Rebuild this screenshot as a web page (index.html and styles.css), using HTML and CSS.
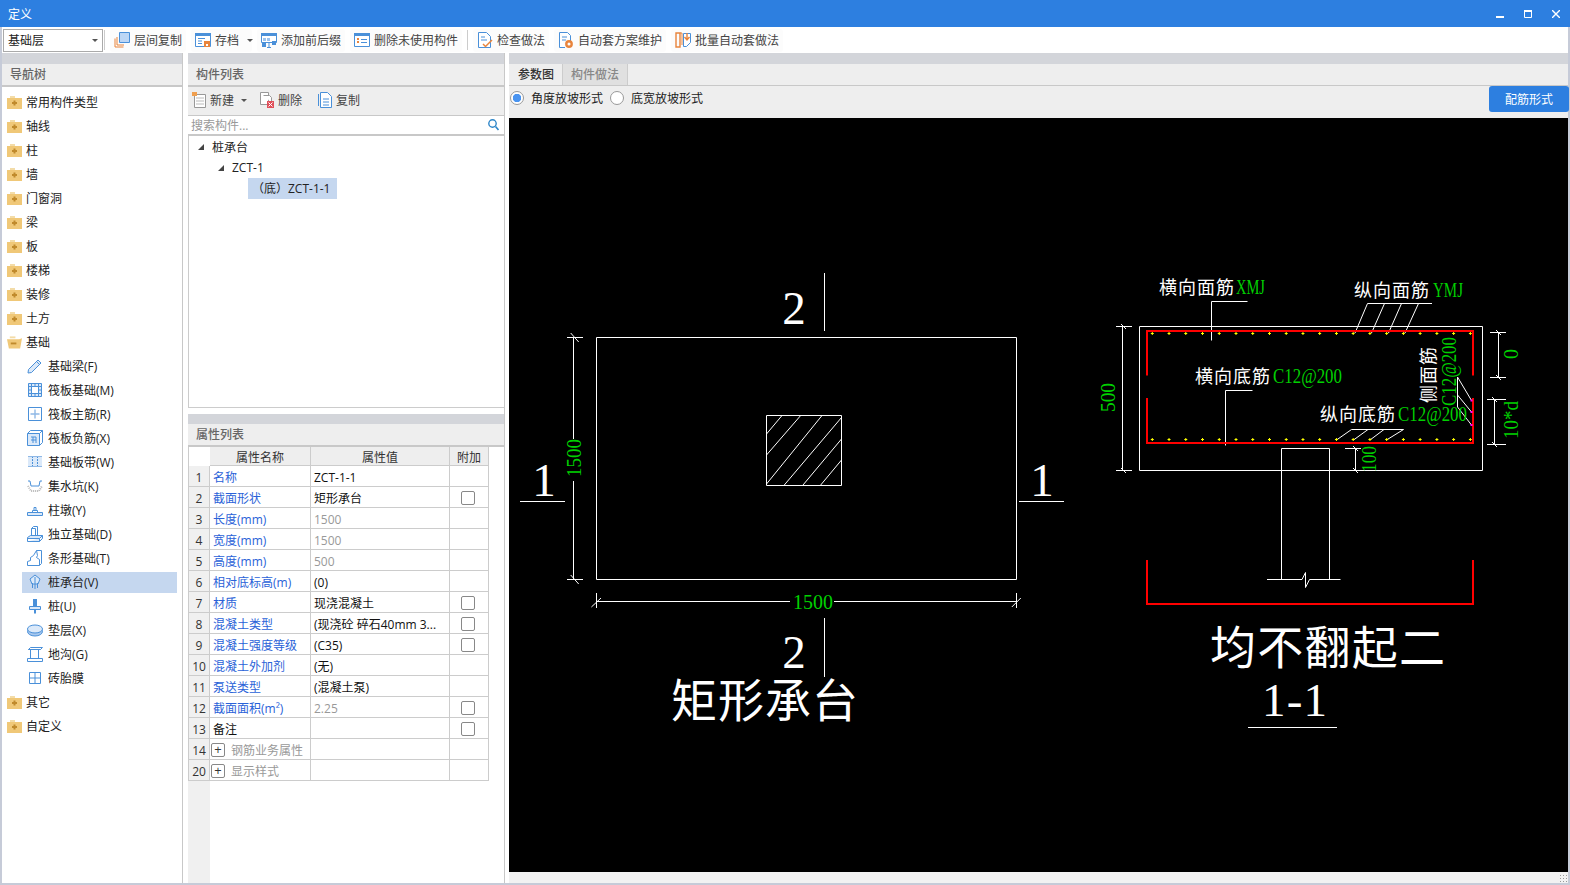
FILE: index.html
```html
<!DOCTYPE html>
<html lang="zh-CN">
<head>
  <meta charset="UTF-8">
  <title>定义</title>
  <link rel="stylesheet" href="styles.css">
</head>
<body>

<svg class="defs" width="0" height="0">
  <symbol id="folder-plus" viewBox="0 0 15 13">
    <path d="M3 0h5v2H3z" fill="#f3dca8"/>
    <path d="M0 2h15v11H0z" fill="#f0c878"/>
    <path d="M5 7h5M7.500 4.500v5" stroke="#c08a2c" stroke-width="2"/>
  </symbol>
  <symbol id="folder-minus" viewBox="0 0 16 13">
    <path d="M3 0h6v2H3z" fill="#f3dca8"/>
    <path d="M0 3h13l3-1-2 11H2z" fill="#f0c878"/>
    <path d="M4 7.500h6" stroke="#c08a2c" stroke-width="2"/>
  </symbol>
</svg>

<div class="titlebar">
  <span class="title">定义</span>
  <div class="winbtns">
    <svg width="8" height="8" viewBox="0 0 8 8"><path d="M0 6h8v2H0z" fill="#fff"/></svg>
    <svg width="8" height="8" viewBox="0 0 8 8"><path d="M.5 1.500h7v6h-7z" fill="none" stroke="#fff"/><path d="M0 0h8v2H0z" fill="#fff"/></svg>
    <svg width="8" height="8" viewBox="0 0 8 8"><path d="M0 0l8 8M8 0l-8 8" stroke="#fff" stroke-width="1.400"/></svg>
  </div>
</div>

<div class="frame">
  <!-- 工具栏 -->
  <div class="toolbar">
    <div class="combo"><span>基础层</span><i class="caret"></i></div>
    <i class="tool-sep"></i>
    <div class="tool">
      <svg class="ic" viewBox="0 0 16 16"><path d="M1 6.500v8.500h8.500M3 5v8h7" fill="none" stroke="#e8843c"/><path d="M5.500.5h10v10h-10z" fill="#bcd6f5" stroke="#4a90d9"/></svg>
      层间复制
    </div>
    <div class="tool tool-menu">
      <svg class="ic" viewBox="0 0 16 16"><path d="M.5 1.500h15v13H.5z" fill="#fff" stroke="#4a90d9"/><path d="M0 1h16v3H0z" fill="#4a90d9"/><path d="M3 6.500h7M3 9h4M3 11.500h4" stroke="#4a90d9"/><path d="M9 9h6v6H9z" fill="#e8843c"/><path d="M11 12h2v2h-2z" fill="#fff"/></svg>
      存档<i class="caret tool-caret"></i>
    </div>
    <div class="tool">
      <svg class="ic" viewBox="0 0 16 16"><path d="M.5 1.500h15v9H.5z" fill="#fff" stroke="#4a90d9"/><path d="M0 1h16v3H0z" fill="#4a90d9"/><path d="M2 6h3v3H2zM6 6h3v3H6z" fill="#9cc3ee"/><path d="M11 9h4v4h-4zM1 11h4v4H1z" fill="#4a90d9"/><path d="M8 10v6M6 15.500h4" stroke="#4a90d9"/></svg>
      添加前后缀
    </div>
    <div class="tool">
      <svg class="ic" viewBox="0 0 16 16"><path d="M.5 1.500h15v13H.5z" fill="#fff" stroke="#4a90d9"/><path d="M0 1h16v3H0z" fill="#4a90d9"/><path d="M3 6h2v2H3zM3 9h2v2H3z" fill="#e8843c"/><path d="M7 7.500h6M7 10.500h6" stroke="#4a90d9"/></svg>
      删除未使用构件
    </div>
    <i class="tool-sep"></i>
    <div class="tool">
      <svg class="ic" viewBox="0 0 16 16"><path d="M1.500.5h8l4 4v11h-12z" fill="#fff" stroke="#4a90d9"/><path d="M4 5h4M4 8h6" stroke="#4a90d9"/><path d="M6 12l2.500 2.500L15 8" fill="none" stroke="#e8843c" stroke-width="1.500"/></svg>
      检查做法
    </div>
    <div class="tool">
      <svg class="ic" viewBox="0 0 16 16"><path d="M1.500.5h8l3 3v6M7 15.500H1.500V.5" fill="#fff" stroke="#4a90d9"/><path d="M4 5h5M4 8h4" stroke="#4a90d9"/><circle cx="11" cy="12" r="2.700" fill="none" stroke="#e8843c" stroke-width="2.400"/></svg>
      自动套方案维护
    </div>
    <div class="tool">
      <svg class="ic" viewBox="0 0 16 16"><path d="M1 1h4v14H1z" fill="none" stroke="#e8843c" stroke-width="1.400"/><path d="M5 1h2v12" fill="none" stroke="#e8843c"/><path d="M8.500 1.500h7v9l-4 4h-3z" fill="#fff" stroke="#4a90d9"/><path d="M12 1v6M9.500 5l2.500 3 2.500-3" fill="none" stroke="#e8843c" stroke-width="1.400"/></svg>
      批量自动套做法
    </div>
  </div>

  <div class="main">
    <!-- 导航树 -->
    <div class="nav">
      <div class="strip"></div>
      <div class="panel-head">导航树</div>
      <div class="nav-list">
        <div class="nav-row"><svg class="folder"><use href="#folder-plus"/></svg>常用构件类型</div>
        <div class="nav-row"><svg class="folder"><use href="#folder-plus"/></svg>轴线</div>
        <div class="nav-row"><svg class="folder"><use href="#folder-plus"/></svg>柱</div>
        <div class="nav-row"><svg class="folder"><use href="#folder-plus"/></svg>墙</div>
        <div class="nav-row"><svg class="folder"><use href="#folder-plus"/></svg>门窗洞</div>
        <div class="nav-row"><svg class="folder"><use href="#folder-plus"/></svg>梁</div>
        <div class="nav-row"><svg class="folder"><use href="#folder-plus"/></svg>板</div>
        <div class="nav-row"><svg class="folder"><use href="#folder-plus"/></svg>楼梯</div>
        <div class="nav-row"><svg class="folder"><use href="#folder-plus"/></svg>装修</div>
        <div class="nav-row"><svg class="folder"><use href="#folder-plus"/></svg>土方</div>
        <div class="nav-row"><svg class="folder"><use href="#folder-minus"/></svg>基础</div>

        <div class="nav-row nav-child"><div class="nav-cell"><svg class="ic" viewBox="0 0 16 16"><path d="M1.500 11.500L11 2l3 3-9.500 9.500-3.500.5z" fill="#dbe9f9" stroke="#4a90d9"/><path d="M9.500 3.500l3 3" stroke="#4a90d9"/></svg>基础梁(F)</div></div>
        <div class="nav-row nav-child"><div class="nav-cell"><svg class="ic" viewBox="0 0 16 16"><path d="M1.500 1.500h13v13h-13z" fill="#dbe9f9" stroke="#4a90d9"/><path d="M4.500 4.500h7v7h-7zM1.500 4.500h3M1.500 8h3M1.500 11.500h3M11.500 4.500h3M11.500 8h3M11.500 11.500h3M4.500 1.500v3M8 1.500v3M11.500 1.500v3M4.500 11.500v3M8 11.500v3M11.500 11.500v3" fill="#fff" stroke="#4a90d9"/></svg>筏板基础(M)</div></div>
        <div class="nav-row nav-child"><div class="nav-cell"><svg class="ic" viewBox="0 0 16 16"><path d="M1.500 1.500h13v13h-13z" fill="#fff" stroke="#4a90d9"/><path d="M8 3.500v9M3.500 8h9" stroke="#8fb8e6" stroke-width="1.400"/></svg>筏板主筋(R)</div></div>
        <div class="nav-row nav-child"><div class="nav-cell"><svg class="ic" viewBox="0 0 16 16"><path d="M.5 3.500h12v12H.5z" fill="#dbe9f9" stroke="#4a90d9"/><path d="M.5 3.500l3-3h12v12l-3 3M12.500 3.500l3-3" fill="none" stroke="#4a90d9"/><path d="M4 7h5M6 7v6M4 10h5M9 7v6" fill="none" stroke="#4a90d9"/></svg>筏板负筋(X)</div></div>
        <div class="nav-row nav-child"><div class="nav-cell"><svg class="ic" viewBox="0 0 16 16"><path d="M1 2h14v11H1z" fill="#dbe9f9"/><path d="M5.500 2v11M10.500 2v11" stroke="#4a90d9" stroke-dasharray="2 1"/><path d="M1 2.500h14M1 12.500h14" stroke="#8fb8e6"/></svg>基础板带(W)</div></div>
        <div class="nav-row nav-child"><div class="nav-cell"><svg class="ic" viewBox="0 0 16 16"><path d="M1 3h2l1 5h8l1-5h2" fill="none" stroke="#4a90d9"/><path d="M1 8l3 5h8l3-5" fill="none" stroke="#b5b5b5" stroke-dasharray="1 1" stroke-width="2"/></svg>集水坑(K)</div></div>
        <div class="nav-row nav-child"><div class="nav-cell"><svg class="ic" viewBox="0 0 16 16"><path d="M.5 10.500h15v3H.5z" fill="#dbe9f9" stroke="#4a90d9"/><path d="M5.500 10.500v-2h5v2M7 8.500V5.500h2v3" fill="none" stroke="#4a90d9"/></svg>柱墩(Y)</div></div>
        <div class="nav-row nav-child"><div class="nav-cell"><svg class="ic" viewBox="0 0 16 16"><path d="M4.500 9.500V2.500l2-2h4v9" fill="#fff" stroke="#4a90d9"/><path d="M4.500 2.500h4v7" fill="none" stroke="#4a90d9"/><path d="M.5 15.500v-4l3-2h12l-3 3H.5M12.500 12.500v3H.5M15.500 9.500v3l-3 3" fill="#dbe9f9" stroke="#4a90d9"/></svg>独立基础(D)</div></div>
        <div class="nav-row nav-child"><div class="nav-cell"><svg class="ic" viewBox="0 0 16 16"><path d="M.5 15.500v-4l3-1v-3l3-2 3-5h5v13l-2 2z" fill="#fff" stroke="#4a90d9"/><path d="M9.500.5l1 5-1 2 3 2v6" fill="none" stroke="#4a90d9"/></svg>条形基础(T)</div></div>
        <div class="nav-row nav-child nav-sel"><div class="nav-cell"><svg class="ic" viewBox="0 0 16 16"><path d="M3 5l5-4 5 4-2 5H5z" fill="#dbe9f9" stroke="#4a90d9"/><path d="M8 3v12M5.500 9v5M10.500 9v5" stroke="#4a90d9"/></svg>桩承台(V)</div></div>
        <div class="nav-row nav-child"><div class="nav-cell"><svg class="ic" viewBox="0 0 16 16"><path d="M6 1h4v8H6z" fill="#4a90d9"/><path d="M2.500 8.500h11v3h-11z" fill="#dbe9f9" stroke="#4a90d9"/><path d="M8 11.500v4" stroke="#4a90d9" stroke-width="2"/></svg>桩(U)</div></div>
        <div class="nav-row nav-child"><div class="nav-cell"><svg class="ic" viewBox="0 0 16 16"><ellipse cx="8" cy="9.500" rx="7.500" ry="4.500" fill="#a8c8ee" stroke="#4a90d9"/><ellipse cx="8" cy="7" rx="7.500" ry="4" fill="#dbe9f9" stroke="#4a90d9"/></svg>垫层(X)</div></div>
        <div class="nav-row nav-child"><div class="nav-cell"><svg class="ic" viewBox="0 0 16 16"><path d="M1.500 3.500l2-2h12l-2 2zM1.500 3.500h12M3.500 3.500v9M11.500 3.500v9M.5 15.500h15v-3H.5z" fill="none" stroke="#4a90d9"/></svg>地沟(G)</div></div>
        <div class="nav-row nav-child"><div class="nav-cell"><svg class="ic" viewBox="0 0 16 16"><path d="M2.500 2.500h11v11h-11zM8 2.500v11M2.500 8h11" fill="#fff" stroke="#4a90d9"/></svg>砖胎膜</div></div>

        <div class="nav-row"><svg class="folder"><use href="#folder-plus"/></svg>其它</div>
        <div class="nav-row"><svg class="folder"><use href="#folder-plus"/></svg>自定义</div>
      </div>
    </div>

    <!-- 构件列表 + 属性列表 -->
    <div class="mid">
      <div class="strip"></div>
      <div class="panel-head">构件列表</div>
      <div class="mid-tools">
        <span class="mid-tool">
          <svg class="ic-sm" viewBox="0 0 14 16"><path d="M2.500 2.500h11v13h-11z" fill="#fff" stroke="#999"/><path d="M4 6h8M4 9h8M4 12h8" stroke="#bbb"/><path d="M0 0h5v4H0z" fill="#f0a050"/></svg>
          新建<i class="caret mid-caret"></i>
        </span>
        <span class="mid-tool">
          <svg class="ic-sm" viewBox="0 0 14 16"><path d="M.5 .5h8v12h-8z" fill="#fff" stroke="#999"/><path d="M3.500 3.500h6l2 2v5" fill="#fff" stroke="#999"/><path d="M7 9h7v7H7z" fill="#e0505a"/><path d="M8.500 10.500l4 4M12.500 10.500l-4 4" stroke="#fff"/></svg>
          删除
        </span>
        <span class="mid-tool">
          <svg class="ic-sm" viewBox="0 0 14 16"><path d="M.5 2v12" stroke="#4a90d9"/><path d="M2.500 .5h7l4 4v11h-11z" fill="#fff" stroke="#4a90d9"/><path d="M5 7h6M5 10h6M5 13h6" stroke="#4a90d9"/></svg>
          复制
        </span>
      </div>
      <div class="search">
        <span>搜索构件...</span>
        <svg width="11" height="12" viewBox="0 0 11 12"><circle cx="4.500" cy="4.500" r="3.700" fill="none" stroke="#2e86c8" stroke-width="1.400"/><path d="M7.500 7.500l3 3.500" stroke="#2e86c8" stroke-width="1.600"/></svg>
      </div>
      <div class="tree">
        <div class="tree-row tree-l1"><i class="tree-arrow"></i>桩承台</div>
        <div class="tree-row tree-l2"><i class="tree-arrow"></i>ZCT-1</div>
        <div class="tree-row tree-l3"><span class="tree-sel">（底）ZCT-1-1</span></div>
      </div>

      <div class="prop-gap"></div>
      <div class="strip strip-low"></div>
      <div class="panel-head">属性列表</div>
      <div class="prop-wrap">
        <table class="props">
          <colgroup><col class="c-num"><col class="c-name"><col class="c-val"><col class="c-add"></colgroup>
          <thead><tr><th class="th-blank"></th><th>属性名称</th><th>属性值</th><th>附加</th></tr></thead>
          <tbody>
            <tr><td class="num">1</td><td class="name">名称</td><td>ZCT-1-1</td><td></td></tr>
            <tr><td class="num">2</td><td class="name">截面形状</td><td>矩形承台</td><td class="add"><i class="check"></i></td></tr>
            <tr><td class="num">3</td><td class="name">长度(mm)</td><td class="off">1500</td><td></td></tr>
            <tr><td class="num">4</td><td class="name">宽度(mm)</td><td class="off">1500</td><td></td></tr>
            <tr><td class="num">5</td><td class="name">高度(mm)</td><td class="off">500</td><td></td></tr>
            <tr><td class="num">6</td><td class="name">相对底标高(m)</td><td>(0)</td><td></td></tr>
            <tr><td class="num">7</td><td class="name">材质</td><td>现浇混凝土</td><td class="add"><i class="check"></i></td></tr>
            <tr><td class="num">8</td><td class="name">混凝土类型</td><td>(现浇砼 碎石40mm 3...</td><td class="add"><i class="check"></i></td></tr>
            <tr><td class="num">9</td><td class="name">混凝土强度等级</td><td>(C35)</td><td class="add"><i class="check"></i></td></tr>
            <tr><td class="num">10</td><td class="name">混凝土外加剂</td><td>(无)</td><td></td></tr>
            <tr><td class="num">11</td><td class="name">泵送类型</td><td>(混凝土泵)</td><td></td></tr>
            <tr><td class="num">12</td><td class="name">截面面积(m²)</td><td class="off">2.25</td><td class="add"><i class="check"></i></td></tr>
            <tr><td class="num">13</td><td>备注</td><td></td><td class="add"><i class="check"></i></td></tr>
            <tr><td class="num">14</td><td class="off"><i class="plus">+</i>钢筋业务属性</td><td></td><td></td></tr>
            <tr><td class="num">20</td><td class="off"><i class="plus">+</i>显示样式</td><td></td><td></td></tr>
          </tbody>
        </table>
      </div>
    </div>

    <!-- 参数图 -->
    <div class="view">
      <div class="strip"></div>
      <div class="tabs">
        <span class="tab tab-on">参数图</span>
        <span class="tab">构件做法</span>
      </div>
      <div class="options">
        <label class="opt"><i class="radio radio-on"></i>角度放坡形式</label>
        <label class="opt"><i class="radio"></i>底宽放坡形式</label>
        <span class="btn-blue">配筋形式</span>
      </div>

      <svg class="canvas" viewBox="509 118 1059 754" width="1059" height="754">
        <!-- 平面图 -->
        <g class="ln">
          <path d="M596.500 337.500h420v242h-420zM766.500 415.500h75v70h-75z"/>
          <path d="M782 415.500L766.500 434M800.700 415.500L766.500 455M822 415.500L766.500 484M841.500 417.500L784.300 485M841.500 439L803 485M841.500 460L820.700 485"/>
          <path d="M824.500 273v58M824.500 618v59"/>
          <path d="M520 501.500h45M1019 501.500h45"/>
          <path d="M573.500 337v102M573.500 481v98M567 337.500h16M567 579.500h16M570.700 333l8 9M570.700 575l8 9"/>
          <path d="M596 601.500h194M834 601.500h182M596.500 593v15M1016.500 593v15M591.400 607l9.600-9M1011.800 607l9-9"/>
        </g>
        <text class="num-big" x="794" y="324" text-anchor="middle">2</text>
        <text class="num-big" x="794" y="668" text-anchor="middle">2</text>
        <text class="num-big" x="544" y="496" text-anchor="middle">1</text>
        <text class="num-big" x="1042" y="496" text-anchor="middle">1</text>
        <text class="dim" x="813" y="609" text-anchor="middle">1500</text>
        <text class="dim" transform="rotate(-90 581 458)" x="581" y="458" text-anchor="middle" textLength="38" lengthAdjust="spacingAndGlyphs">1500</text>
        <text class="cn-big" x="671" y="717" textLength="187">矩形承台</text>

        <!-- 剖面图 -->
        <g class="ln">
          <path d="M1139.500 326.500h343v144h-343z"/>
          <path d="M1281.500 448.500h48M1281.500 448.500v131M1329.500 448.500v131"/>
          <path d="M1267 579.500h35l3.500-7v15l4-8h31"/>
          <path d="M1122.500 326v144M1116 326.500h16M1116 470.500h16M1121 324l5 5M1121 468l5 5"/>
          <path d="M1498.500 332v45M1490 332.500h16M1490 377.500h16M1496 330l5 5M1496 375l5 5"/>
          <path d="M1494.500 399v45M1487 399.500h19M1487 444.500h19M1492 397l5 5M1492 442l5 5"/>
          <path d="M1355.500 448v22M1345 448.500h16M1353 446l5 5M1353 468l5 5"/>
          <path d="M1211.500 301.500h36M1211.500 301.500v39M1225.500 390.500h27M1225.500 390.500v55"/>
          <path d="M1367.500 303.500h64.500M1367.500 303.500L1355 333M1384.500 303.500L1371.500 333M1401.500 303.500L1388.500 333M1418.500 303.500L1405 333"/>
          <path d="M1351.500 429.500h52M1351.500 429.500L1336.500 440M1368 429.500L1353.500 440M1384 429.500L1370 440M1403.500 429.500L1386.500 440"/>
          <path d="M1457.500 377v30M1457.500 377l14 23.500M1457.500 395l14 17M1457.500 407l14 18"/>
          <path d="M1248 727.500h89"/>
        </g>
        <path class="rebar" d="M1147 375.500V331h326v44.500M1147 398v45h326v-45M1147 560v44h326v-44"/>
        <!-- 钢筋点: 一条横虚线加一条竖虚线画出小十字 -->
        <path class="dots-h" d="M1150.800 333.500h321M1150.800 439.500h321"/>
        <path class="dots-v" d="M1151.800 333.500h320M1151.800 439.500h320"/>
        <path class="side-dots" d="M1471.500 400.500h.01M1471.500 412h.01M1471.500 425h.01"/>

        <text class="cn-mid" x="1159" y="294" textLength="75">横向面筋</text>
        <text class="dim" x="1236" y="294" textLength="29" lengthAdjust="spacingAndGlyphs">XMJ</text>
        <text class="cn-mid" x="1354" y="297" textLength="75">纵向面筋</text>
        <text class="dim" x="1433" y="297" textLength="30" lengthAdjust="spacingAndGlyphs">YMJ</text>
        <text class="cn-mid" x="1195" y="383" textLength="75">横向底筋</text>
        <text class="dim" x="1273" y="383" textLength="69" lengthAdjust="spacingAndGlyphs">C12@200</text>
        <text class="cn-mid" x="1320" y="421" textLength="75">纵向底筋</text>
        <text class="dim" x="1398" y="421" textLength="69" lengthAdjust="spacingAndGlyphs">C12@200</text>
        <text class="cn-mid" transform="rotate(-90 1435 403)" x="1435" y="403" textLength="56">侧面筋</text>
        <text class="dim" transform="rotate(-90 1456 406)" x="1456" y="406" textLength="69" lengthAdjust="spacingAndGlyphs">C12@200</text>
        <text class="dim" transform="rotate(-90 1115 412)" x="1115" y="412" textLength="29" lengthAdjust="spacingAndGlyphs">500</text>
        <text class="dim" transform="rotate(-90 1518 354)" x="1518" y="354" text-anchor="middle">0</text>
        <text class="dim" transform="rotate(-90 1518 439)" x="1518" y="439" textLength="38" lengthAdjust="spacingAndGlyphs">10*d</text>
        <text class="dim" transform="rotate(-90 1376 472)" x="1376" y="472" textLength="26" lengthAdjust="spacingAndGlyphs">100</text>

        <text class="cn-big" x="1210" y="664" textLength="235">均不翻起二</text>
        <text class="num-big" x="1262" y="716" textLength="65">1-1</text>
      </svg>

      <div class="view-foot"><i class="grip"></i></div>
    </div>
  </div>
</div>

</body>
</html>
```

FILE: styles.css
```css
/* 整体 */
* {
  box-sizing: border-box;
}

body {
  margin: 0;
  width: 1570px;
  height: 885px;
  overflow: hidden;
  background-color: #fff;
  color: #333;
  font-family: "Open Sans", "Noto Sans CJK SC", sans-serif;
  font-size: 12px;
}

i {
  font-style: normal;
}

.defs {
  position: absolute;
}

/* 标题栏 */
.titlebar {
  display: flex;
  align-items: center;
  justify-content: space-between;
  height: 27px;
  padding: 0 10px 0 8px;
  background-color: #2d7fe0;
  color: #fff;
}

.winbtns {
  display: flex;
  gap: 20px;
}

.frame {
  height: 858px;
  border: solid #c6cbd8;
  border-width: 0 2px 2px;
}

/* 工具栏 */
.toolbar {
  display: flex;
  align-items: center;
  height: 26px;
  padding-left: 1px;
  background-color: #fff;
}

.combo {
  display: flex;
  align-items: center;
  justify-content: space-between;
  width: 100px;
  height: 23px;
  padding: 0 4px;
  border: 1px solid #aaa;
  color: #222;
}

.caret {
  display: inline-block;
  width: 0;
  height: 0;
  border-top: 3px solid #555;
  border-left: 3px solid transparent;
  border-right: 3px solid transparent;
}

.tool-caret {
  margin: 0 -1px 0 4px;
}

.mid-caret {
  margin: 0 -3px 0 3px;
}

.tool-sep {
  width: 1px;
  height: 20px;
  margin: 0 5px 0 1px;
  background-color: #ccc;
}

.tool {
  display: flex;
  align-items: center;
  gap: 4px;
  height: 23px;
  margin-right: 5px;
  padding: 0 4px;
  border-radius: 3px;
  background-color: #fcfcfc;
  color: #444;
  white-space: nowrap;
}

.tool-menu {
  padding-right: 0;
}

.tool + .tool-sep {
  margin-left: 0;
}

.ic {
  flex: none;
  width: 16px;
  height: 16px;
}

.ic-sm {
  flex: none;
  width: 14px;
  height: 16px;
}

/* 三栏 */
.main {
  display: flex;
  height: 830px;
}

.strip {
  height: 11px;
  background-color: #d3d5da;
}

.strip-low {
  height: 10px;
}

.panel-head {
  height: 23px;
  padding: 2px 8px 0;
  border-bottom: 2px solid #c8c8c8;
  background-color: #eee;
  color: #666;
  font-weight: 500;
  line-height: 18px;
}

/* 导航树 */
.nav {
  width: 181px;
  border-right: 1px solid #c8c8c8;
}

.nav-list {
  padding-top: 3px;
}

.nav-row {
  display: flex;
  align-items: center;
  height: 24px;
  padding-left: 5px;
  color: #222;
}

.folder {
  flex: none;
  width: 15px;
  height: 13px;
  margin-right: 4px;
}

.nav-child {
  padding-left: 20px;
  padding-right: 5px;
}

.nav-cell {
  display: flex;
  flex: 1;
  align-items: center;
  gap: 5px;
  height: 21px;
  padding-left: 5px;
}

.nav-sel .nav-cell {
  background-color: #c5d7ef;
}

/* 构件列表 */
.mid {
  width: 317px;
  margin-left: 5px;
  border-right: 1px solid #c8c8c8;
}

.mid-tools {
  display: flex;
  align-items: center;
  gap: 16px;
  height: 29px;
  padding: 0 0 2px 4px;
  border-bottom: 1px solid #c8c8c8;
  background-color: #eee;
}

.mid-tool {
  display: flex;
  align-items: center;
  gap: 4px;
  color: #444;
}

.search {
  display: flex;
  align-items: center;
  justify-content: space-between;
  height: 20px;
  padding: 0 5px 0 3px;
  border-bottom: 2px solid #c8c8c8;
  color: #999;
}

.tree {
  height: 272px;
  border-left: 1px solid #ccc;
  border-bottom: 1px solid #ccc;
  color: #222;
}

.tree-row {
  display: flex;
  align-items: center;
  height: 21px;
}

.tree-arrow {
  width: 0;
  height: 0;
  margin-right: 8px;
  border-bottom: 6px solid #444;
  border-left: 6px solid transparent;
}

.tree-l1 {
  padding-left: 9px;
}

.tree-l2 {
  padding-left: 29px;
}

.tree-l3 {
  padding-left: 59px;
}

.tree-sel {
  width: 89px;
  height: 21px;
  padding-left: 4px;
  background-color: #c5d7ef;
  line-height: 21px;
  white-space: nowrap;
}

.prop-gap {
  height: 6px;
}

/* 属性表 */
.prop-wrap {
  height: 436px;
  background: linear-gradient(to right, #f0f0f0 22px, #fff 22px);
}

.props {
  width: 301px;
  table-layout: fixed;
  border-collapse: separate;
  border-spacing: 0;
  border-left: 1px solid #ccc;
}

.c-num {
  width: 21px;
}

.c-name {
  width: 101px;
}

.c-val {
  width: 139px;
}

.c-add {
  width: 39px;
}

.props th {
  height: 19px;
  padding: 3px 0 0;
  border-right: 1px solid #ccc;
  border-bottom: 1px solid #ccc;
  background-color: #eee;
  font-weight: 400;
  line-height: 15px;
}

.props .th-blank {
  border: 0;
  background-color: #fff;
}

.props td {
  height: 21px;
  padding: 3px 3px 0;
  overflow: hidden;
  border-right: 1px solid #ccc;
  border-bottom: 1px solid #ccc;
  color: #111;
  line-height: 16px;
  white-space: nowrap;
}

.props td.num {
  padding: 3px 0 0;
  background-color: #f0f0f0;
  color: #333;
  text-align: center;
}

.props td.name {
  color: #2a62d8;
}

.props td.off {
  color: #999;
}

.props td.add {
  padding: 0 2px 0 0;
  text-align: center;
}

.check {
  display: inline-block;
  width: 14px;
  height: 14px;
  border: 1px solid #888;
  border-radius: 2px;
  vertical-align: middle;
}

.plus {
  display: inline-block;
  width: 14px;
  height: 14px;
  margin: 0 6px 0 -2px;
  border: 1px solid #888;
  border-radius: 2px;
  color: #333;
  font-size: 13px;
  line-height: 11px;
  text-align: center;
  vertical-align: top;
}

/* 参数图 */
.view {
  width: 1059px;
  margin-left: 4px;
}

.tabs {
  display: flex;
  height: 22px;
  padding-left: 1px;
  border-bottom: 1px solid #c8c8c8;
  background-color: #eee;
}

.tab {
  width: 65px;
  border-right: 1px solid #ccc;
  background-color: #e0e0e0;
  color: #888;
  font-weight: 500;
  line-height: 22px;
  text-align: center;
}

.tab-on {
  width: 53px;
  background-color: #eee;
  color: #333;
}

.options {
  display: flex;
  align-items: center;
  gap: 7px;
  height: 32px;
  padding: 0 1px 8px;
  background-color: #eee;
  color: #222;
}

.opt {
  display: flex;
  align-items: center;
  gap: 7px;
}

.radio {
  width: 14px;
  height: 14px;
  border: 1px solid #999;
  border-radius: 50%;
  background-color: #fff;
}

.radio-on {
  background: radial-gradient(circle, #4a94f0 4px, #fff 4.5px);
}

.btn-blue {
  width: 80px;
  height: 26px;
  margin: 2px -2px 0 auto;
  border-radius: 3px;
  background-color: #2d7fe0;
  color: #fff;
  line-height: 28px;
  text-align: center;
}

.canvas {
  display: block;
  background-color: #000;
}

.view-foot {
  display: flex;
  justify-content: flex-end;
  align-items: flex-end;
  height: 11px;
  background-color: #f2f2f2;
}

.grip {
  width: 9px;
  height: 9px;
  background-image: radial-gradient(circle, #999 1px, transparent 1px);
  background-size: 3px 3px;
}

/* CAD 图形 */
.ln {
  fill: none;
  stroke: #fff;
  stroke-width: 1;
}

.rebar {
  fill: none;
  stroke: #f00;
  stroke-width: 2;
}

.dots-h {
  fill: none;
  stroke: #ff0;
  stroke-width: 1;
  stroke-dasharray: 3 13.740;
}

.dots-v {
  fill: none;
  stroke: #ff0;
  stroke-width: 3;
  stroke-dasharray: 1 15.740;
}

.side-dots {
  fill: none;
  stroke: #f0f;
  stroke-width: 2;
  stroke-linecap: square;
}

.num-big {
  fill: #fff;
  font-family: "Liberation Serif", serif;
  font-size: 47px;
}

.cn-big {
  fill: #fff;
  font-family: "Noto Sans CJK SC", sans-serif;
  font-size: 46px;
}

.cn-mid {
  fill: #fff;
  font-family: "Noto Sans CJK SC", sans-serif;
  font-size: 18px;
}

.dim {
  fill: #00d000;
  font-family: "Liberation Serif", serif;
  font-size: 20px;
}
```
